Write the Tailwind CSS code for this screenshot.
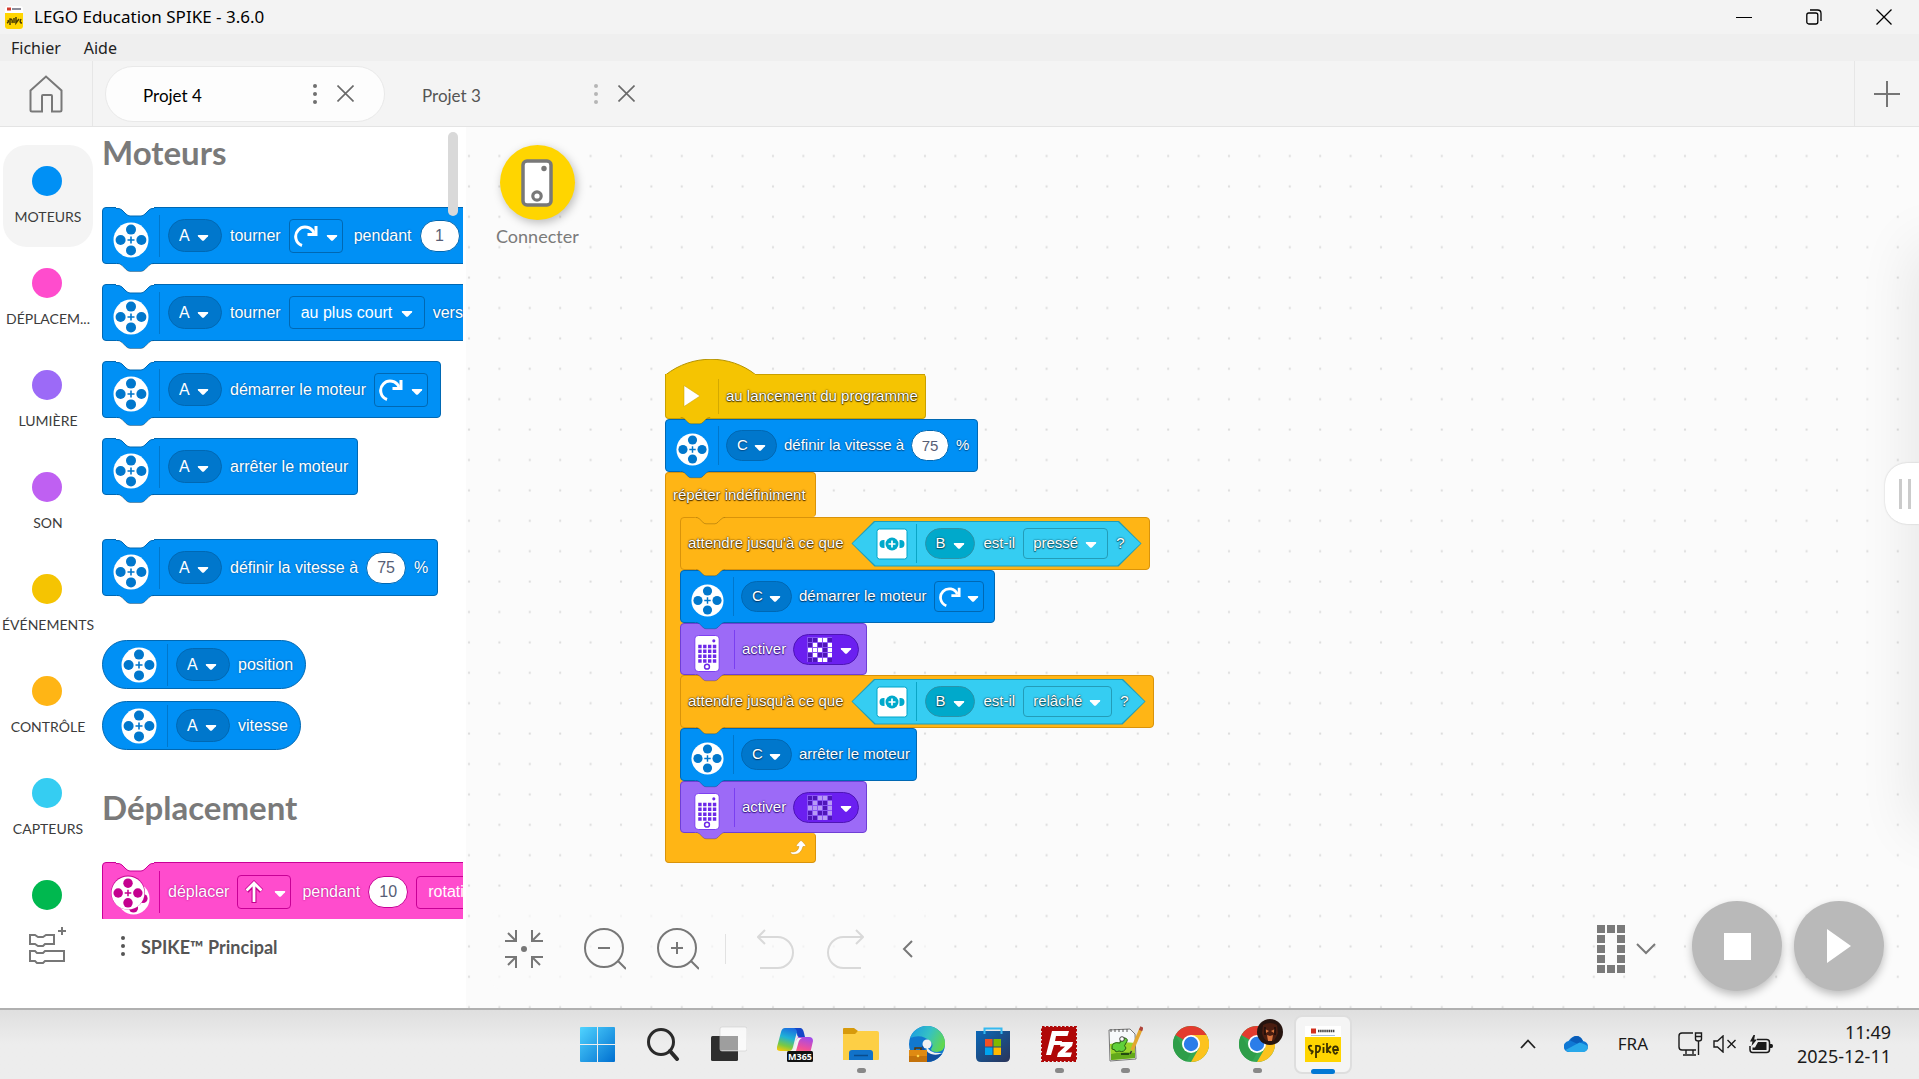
<!DOCTYPE html>
<html lang="fr">
<head>
<meta charset="utf-8">
<title>LEGO Education SPIKE - 3.6.0</title>
<script src="https://cdn.jsdelivr.net/npm/@tailwindcss/browser@4"></script>
</head>
<body class="flex h-screen flex-col overflow-hidden bg-[#f3f3f3] font-['Noto_Sans',sans-serif] text-black">

<!-- Shared icon symbols -->
<svg class="hidden" aria-hidden="true">
  <symbol id="motor" viewBox="0 0 36 36">
    <circle cx="18" cy="18" r="17.5" fill="#fff"/>
    <g fill="currentColor"><circle cx="18" cy="7.6" r="5"/><circle cx="18" cy="28.4" r="5"/><circle cx="7.6" cy="18" r="5"/><circle cx="28.4" cy="18" r="5"/></g>
    <path d="M18 14.5v7M14.5 18h7" stroke="currentColor" stroke-width="1.6"/>
  </symbol>
  <symbol id="caret" viewBox="0 0 12 8"><path d="M1.5 1h9q1.4 0 .5 1.2L7.2 6.2q-1.2 1.2-2.4 0L1 2.200q-.9-1.200.5-1.200z" fill="#fff"/></symbol>
  <symbol id="rotate" viewBox="0 0 24 24"><path d="M8 21.500A9.500 9.500 0 1 1 20 9" fill="none" stroke="#fff" stroke-width="3"/><path d="M13.500 10.500h8.500V2" fill="none" stroke="#fff" stroke-width="3"/></symbol>
  <symbol id="force" viewBox="0 0 32 32">
    <rect x="1" y="1" width="30" height="30" rx="2.500" fill="#fff" stroke="#00a5c9"/>
    <circle cx="16" cy="16" r="6.500" fill="currentColor"/><path d="M16 12.500v7M12.500 16h7" stroke="#fff" stroke-width="1.700"/>
    <path d="M8.500 12v8q-5 .5-5-4t5-4zM23.500 12q5-.5 5 4t-5 4z" fill="currentColor"/>
  </symbol>
  <symbol id="hub" viewBox="0 0 26 38">
    <rect x=".5" y=".5" width="25" height="37" rx="3.500" fill="#fff" stroke="#7b3df0"/>
    <g fill="#6d28e8"><circle cx="20" cy="6" r="1.600"/>
    <path d="M4 10h3.500v3.500H4zM9 10h3.500v3.500H9zM14 10h3.500v3.500H14zM19 10h3.500v3.500H19zM4 15h3.500v3.500H4zM9 15h3.500v3.500H9zM14 15h3.500v3.500H14zM19 15h3.500v3.500H19zM4 20h3.500v3.500H4zM9 20h3.500v3.500H9zM14 20h3.500v3.500H14zM19 20h3.500v3.500H19zM4 25h3.500v3.500H4zM9 25h3.500v3.500H9zM14 25h3.500v3.500H14zM19 25h3.500v3.500H19z"/></g>
    <circle cx="13" cy="32.500" r="2.500" fill="none" stroke="#6d28e8" stroke-width="1.500"/>
  </symbol>
  <symbol id="matrix" viewBox="0 0 25 25">
    <path d="M0 0h25v25H0z" fill="#8a55f4"/>
    <path d="M1 1h4v4H1zM6 1h4v4H6zM21 1h4v4h-4zM1 6h4v4H1zM11 6h4v4h-4zM16 6h4v4h-4zM16 11h4v4h-4zM1 16h4v4H1zM11 16h4v4h-4zM16 16h4v4h-4zM1 21h4v4H1zM6 21h4v4H6zM21 21h4v4h-4z" fill="#4f16b8"/>
    <path d="M11 1h4v4h-4zM16 1h4v4h-4zM6 6h4v4H6zM21 6h4v4h-4zM1 11h4v4H1zM6 11h4v4H6zM11 11h4v4h-4zM21 11h4v4h-4zM6 16h4v4H6zM21 16h4v4h-4zM11 21h4v4h-4zM16 21h4v4h-4z" fill="currentColor"/>
  </symbol>
  <symbol id="notch" viewBox="0 0 38 10"><path d="M0 0h38v1q-3 0-5 2l-4 4q-2 2-4 2H14q-2 0-4-2L6 3Q4 1 0 1z" fill="#fff"/><path d="M0 1.500q4-.5 6 1.500l4 4q2 2 4 2h11q2 0 4-2l4-4q2-2 5-1.500" fill="none" stroke="currentColor"/></symbol>
  <symbol id="tail" viewBox="0 0 38 10"><path d="M0 0h38v.5q-3 0-5 2l-4 4q-2 2-4 2H14q-2 0-4-2L6 2.500Q4 .5 0 .5z" fill="currentColor"/><path d="M1 .5q3 0 5 2l4 4q2 2 4 2h11q2 0 4-2l4-4q2-2 5-2" fill="none" stroke="#000" stroke-opacity=".28"/></symbol>
  <symbol id="chrome" viewBox="0 0 36 36">
    <circle cx="18" cy="18" r="18" fill="#34a853"/>
    <path d="M18 18 2.400 9A18 18 0 0 1 33.600 9z" fill="#e33b2e"/><path d="M18 9h15.600A18 18 0 0 1 18 36l7.800-13.500z" fill="#fcc31e"/>
    <path d="M2.400 9 10.200 22.500 18 27l-4.800 8.400A18 18 0 0 1 2.400 9z" fill="#2e9e49"/>
    <circle cx="18" cy="18" r="9" fill="#fff"/><circle cx="18" cy="18" r="7.200" fill="#2b7de9"/>
  </symbol>
</svg>

<!-- Title bar -->
<header class="flex h-[34px] shrink-0 items-center bg-[#f3f3f3] pl-1">
  <svg class="h-[26px] w-5" viewBox="0 0 20 26"><rect x="1" y="2" width="18" height="23" rx="3" fill="#fff"/><path d="M1 9h18v13q0 3-3 3H4q-3 0-3-3z" fill="#ffd500"/><path d="M3 3.500h4v3H3z" fill="#d33a2c"/><path d="M8 5h9" stroke="#667" stroke-width="1.500"/><path d="M3 19q2-1 1-3M6 21v-6q3 0 2 4M10 14v5M12 13v6l3-4M17 15q-2 4 1 4" stroke="#4a3c00" stroke-width="1.500" fill="none"/></svg>
  <h1 class="ml-[10px] text-[17px]">LEGO Education SPIKE - 3.6.0</h1>
  <div class="ml-auto flex items-center">
    <button class="flex h-[34px] w-[70px] items-center justify-center" aria-label="Réduire"><svg class="size-4" viewBox="0 0 16 16"><path d="M0 8.500h16" stroke="#000"/></svg></button>
    <button class="flex h-[34px] w-[70px] items-center justify-center" aria-label="Restaurer"><svg class="size-4" viewBox="0 0 16 16" fill="none" stroke="#000" stroke-width="1.300"><rect x=".8" y="4" width="11" height="11" rx="2"/><path d="M4 1h7.500q3.500 0 3.500 3.500V12"/></svg></button>
    <button class="flex h-[34px] w-[70px] items-center justify-center" aria-label="Fermer"><svg class="size-4" viewBox="0 0 16 16"><path d="m.5.5 15 15m0-15-15 15" stroke="#000" stroke-width="1.300"/></svg></button>
  </div>
</header>

<nav class="flex h-[27px] shrink-0 items-center gap-[23px] bg-[#efefef] pl-[11px] text-base text-[#222]">
  <a href="#">Fichier</a><a href="#">Aide</a>
</nav>

<!-- Project tabs -->
<div class="flex h-[66px] shrink-0 items-center border-b border-[#e4e4e4] bg-[#f4f4f4] font-['Lato',sans-serif] text-[17px]">
  <button class="flex h-full w-[93px] items-center justify-center border-r border-[#e6e6e6]" aria-label="Accueil">
    <svg class="h-[38px] w-[34px]" viewBox="0 0 34 38" fill="none" stroke="#787878" stroke-width="2"><path d="M1.500 15.500 17 1.500l15.500 14V35q0 1.500-1.500 1.500h-8V21q0-1-1-1h-8q-1 0-1 1v15.500H3q-1.500 0-1.500-1.500z"/></svg>
  </button>
  <div class="ml-3 flex h-14 w-[280px] items-center rounded-[28px] border border-[#e9e9e9] bg-[#fdfdfd] pr-[30px] pl-[37px]">
    <a href="#" class="mt-1 text-black">Projet 4</a>
    <button class="ml-auto" aria-label="Options"><svg class="h-7 w-1" viewBox="0 0 4 28" fill="#707070"><circle cx="2" cy="6" r="2"/><circle cx="2" cy="14" r="2"/><circle cx="2" cy="22" r="2"/></svg></button>
    <button class="ml-5" aria-label="Fermer Projet 4"><svg class="size-[17px]" viewBox="0 0 17 17"><path d="m.5.5 16 16m0-16-16 16" stroke="#6a6a6a" stroke-width="1.600"/></svg></button>
  </div>
  <div class="flex h-14 w-[280px] items-center pr-[30px] pl-[37px]">
    <a href="#" class="mt-1 text-[#555]">Projet 3</a>
    <button class="ml-auto" aria-label="Options"><svg class="h-7 w-1" viewBox="0 0 4 28" fill="#b5b5b5"><circle cx="2" cy="6" r="2"/><circle cx="2" cy="14" r="2"/><circle cx="2" cy="22" r="2"/></svg></button>
    <button class="ml-5" aria-label="Fermer Projet 3"><svg class="size-[17px]" viewBox="0 0 17 17"><path d="m.5.5 16 16m0-16-16 16" stroke="#6a6a6a" stroke-width="1.600"/></svg></button>
  </div>
  <button class="ml-auto flex h-full w-[65px] items-center justify-center border-l border-[#e6e6e6]" aria-label="Nouveau projet"><svg class="size-[26px]" viewBox="0 0 26 26"><path d="M13 0v26M0 13h26" stroke="#757575" stroke-width="2"/></svg></button>
</div>

<main class="flex min-h-0 flex-1 border-b-2 border-[#b0b0b0]">

  <!-- Categories and block palette -->
  <aside class="flex w-[466px] shrink-0 flex-col bg-white">
    <div class="flex min-h-0 flex-1 overflow-hidden">
      <ul class="w-[93px] shrink-0 pt-[18px] pl-[3px] font-['Lato',sans-serif] text-sm text-[#3c3c3c]">
        <li><button class="flex h-[102px] w-[90px] flex-col items-center rounded-3xl bg-[#f4f4f4] pt-[21px] whitespace-nowrap"><span class="mr-[2px] size-[30px] rounded-full bg-[#0090f5]"></span><span class="mt-3 leading-[18px]">MOTEURS</span></button></li>
        <li><button class="flex h-[102px] w-[90px] flex-col items-center pt-[21px] whitespace-nowrap"><span class="mr-[2px] size-[30px] rounded-full bg-[#ff4ccd]"></span><span class="mt-3 leading-[18px]">DÉPLACEM...</span></button></li>
        <li><button class="flex h-[102px] w-[90px] flex-col items-center pt-[21px] whitespace-nowrap"><span class="mr-[2px] size-[30px] rounded-full bg-[#9c6af7]"></span><span class="mt-3 leading-[18px]">LUMIÈRE</span></button></li>
        <li><button class="flex h-[102px] w-[90px] flex-col items-center pt-[21px] whitespace-nowrap"><span class="mr-[2px] size-[30px] rounded-full bg-[#bf60f2]"></span><span class="mt-3 leading-[18px]">SON</span></button></li>
        <li><button class="flex h-[102px] w-[90px] flex-col items-center pt-[21px] whitespace-nowrap"><span class="mr-[2px] size-[30px] rounded-full bg-[#f5c402]"></span><span class="mt-3 leading-[18px]">ÉVÉNEMENTS</span></button></li>
        <li><button class="flex h-[102px] w-[90px] flex-col items-center pt-[21px] whitespace-nowrap"><span class="mr-[2px] size-[30px] rounded-full bg-[#ffb515]"></span><span class="mt-3 leading-[18px]">CONTRÔLE</span></button></li>
        <li><button class="flex h-[102px] w-[90px] flex-col items-center pt-[21px] whitespace-nowrap"><span class="mr-[2px] size-[30px] rounded-full bg-[#35cdf2]"></span><span class="mt-3 leading-[18px]">CAPTEURS</span></button></li>
        <li><button class="flex h-[102px] w-[90px] flex-col items-center pt-[21px] whitespace-nowrap" aria-label="Opérateurs"><span class="mr-[2px] size-[30px] rounded-full bg-[#00b84f]"></span></button></li>
      </ul>

      <div class="relative ml-[9px] w-[361px] overflow-hidden pt-[5px] font-['Liberation_Sans',sans-serif] text-base whitespace-nowrap text-white">
        <h2 class="mb-[35px] font-['Lato',sans-serif] text-[33px] leading-10 font-bold text-[#7a7a7a]">Moteurs</h2>
        <div class="flex flex-col items-start gap-5 [text-shadow:0_0_2px_#004f8f]">

          <div class="relative flex h-[57px] items-center gap-2 rounded-[4px] border border-[#0068b3] bg-[#0090f5] pr-[11px] pl-[10px]">
            <svg class="absolute -top-px left-[13px] h-[10px] w-[38px] text-[#0068b3]"><use href="#notch"/></svg>
            <svg class="absolute top-[55px] left-[13px] h-[10px] w-[38px] text-[#0090f5]"><use href="#tail"/></svg>
            <svg class="mt-2 mr-[2px] size-9 text-[#0077cc]"><use href="#motor"/></svg>
            <i class="h-[42px] w-px bg-[#0077cc]"></i>
            <label class="relative"><select aria-label="Port" class="block h-[33px] w-[54px] appearance-none rounded-full border border-[#0068b3] bg-[#0077cc] pl-[10px]"><option>A</option></select><svg class="pointer-events-none absolute top-[15px] left-[29px] h-2 w-3"><use href="#caret"/></svg></label>
            <span>tourner</span>
            <button aria-label="Sens horaire" class="mr-[3px] flex h-[34px] w-[54px] items-center gap-2 rounded-[4px] border border-[#0068b3] pl-1"><svg class="size-6"><use href="#rotate"/></svg><svg class="mt-1 h-2 w-3"><use href="#caret"/></svg></button>
            <span>pendant</span>
            <input aria-label="Valeur" value="1" class="h-8 w-10 rounded-full border border-[#0068b3] bg-white text-center text-[#575e75]">
          </div>

          <div class="relative flex h-[57px] items-center gap-2 rounded-[4px] border border-[#0068b3] bg-[#0090f5] pr-[11px] pl-[10px]">
            <svg class="absolute -top-px left-[13px] h-[10px] w-[38px] text-[#0068b3]"><use href="#notch"/></svg>
            <svg class="absolute top-[55px] left-[13px] h-[10px] w-[38px] text-[#0090f5]"><use href="#tail"/></svg>
            <svg class="mt-2 mr-[2px] size-9 text-[#0077cc]"><use href="#motor"/></svg>
            <i class="h-[42px] w-px bg-[#0077cc]"></i>
            <label class="relative"><select aria-label="Port" class="block h-[33px] w-[54px] appearance-none rounded-full border border-[#0068b3] bg-[#0077cc] pl-[10px]"><option>A</option></select><svg class="pointer-events-none absolute top-[15px] left-[29px] h-2 w-3"><use href="#caret"/></svg></label>
            <span>tourner</span>
            <label class="relative"><select aria-label="Trajet" class="block h-[33px] w-[136px] appearance-none rounded-[4px] border border-[#0068b3] pl-[11px]"><option>au plus court</option></select><svg class="pointer-events-none absolute top-[14px] right-3 h-2 w-3"><use href="#caret"/></svg></label>
            <span>vers</span>
          </div>

          <div class="relative flex h-[57px] items-center gap-2 rounded-[4px] border border-[#0068b3] bg-[#0090f5] pr-3 pl-[10px]">
            <svg class="absolute -top-px left-[13px] h-[10px] w-[38px] text-[#0068b3]"><use href="#notch"/></svg>
            <svg class="absolute top-[55px] left-[13px] h-[10px] w-[38px] text-[#0090f5]"><use href="#tail"/></svg>
            <svg class="mt-2 mr-[2px] size-9 text-[#0077cc]"><use href="#motor"/></svg>
            <i class="h-[42px] w-px bg-[#0077cc]"></i>
            <label class="relative"><select aria-label="Port" class="block h-[33px] w-[54px] appearance-none rounded-full border border-[#0068b3] bg-[#0077cc] pl-[10px]"><option>A</option></select><svg class="pointer-events-none absolute top-[15px] left-[29px] h-2 w-3"><use href="#caret"/></svg></label>
            <span>démarrer le moteur</span>
            <button aria-label="Sens horaire" class="flex h-[34px] w-[54px] items-center gap-2 rounded-[4px] border border-[#0068b3] pl-1"><svg class="size-6"><use href="#rotate"/></svg><svg class="mt-1 h-2 w-3"><use href="#caret"/></svg></button>
          </div>

          <div class="relative flex h-[57px] items-center gap-2 rounded-[4px] border border-[#0068b3] bg-[#0090f5] pr-[9px] pl-[10px]">
            <svg class="absolute -top-px left-[13px] h-[10px] w-[38px] text-[#0068b3]"><use href="#notch"/></svg>
            <svg class="absolute top-[55px] left-[13px] h-[10px] w-[38px] text-[#0090f5]"><use href="#tail"/></svg>
            <svg class="mt-2 mr-[2px] size-9 text-[#0077cc]"><use href="#motor"/></svg>
            <i class="h-[42px] w-px bg-[#0077cc]"></i>
            <label class="relative"><select aria-label="Port" class="block h-[33px] w-[54px] appearance-none rounded-full border border-[#0068b3] bg-[#0077cc] pl-[10px]"><option>A</option></select><svg class="pointer-events-none absolute top-[15px] left-[29px] h-2 w-3"><use href="#caret"/></svg></label>
            <span>arrêter le moteur</span>
          </div>

          <div class="relative mt-6 flex h-[57px] items-center gap-2 rounded-[4px] border border-[#0068b3] bg-[#0090f5] pr-[9px] pl-[10px]">
            <svg class="absolute -top-px left-[13px] h-[10px] w-[38px] text-[#0068b3]"><use href="#notch"/></svg>
            <svg class="absolute top-[55px] left-[13px] h-[10px] w-[38px] text-[#0090f5]"><use href="#tail"/></svg>
            <svg class="mt-2 mr-[2px] size-9 text-[#0077cc]"><use href="#motor"/></svg>
            <i class="h-[42px] w-px bg-[#0077cc]"></i>
            <label class="relative"><select aria-label="Port" class="block h-[33px] w-[54px] appearance-none rounded-full border border-[#0068b3] bg-[#0077cc] pl-[10px]"><option>A</option></select><svg class="pointer-events-none absolute top-[15px] left-[29px] h-2 w-3"><use href="#caret"/></svg></label>
            <span>définir la vitesse à</span>
            <input aria-label="Vitesse" value="75" class="h-8 w-10 rounded-full border border-[#0068b3] bg-white text-center text-[#575e75]">
            <span>%</span>
          </div>
        </div>

        <div class="mt-11 flex flex-col items-start gap-3 [text-shadow:0_0_2px_#004f8f]">
          <div class="flex h-[49px] items-center gap-2 rounded-full border border-[#0068b3] bg-[#0090f5] pr-3 pl-[18px]">
            <svg class="mr-[2px] size-9 text-[#0077cc]"><use href="#motor"/></svg>
            <i class="h-[42px] w-px bg-[#0077cc]"></i>
            <label class="relative"><select aria-label="Port" class="block h-[33px] w-[54px] appearance-none rounded-full border border-[#0068b3] bg-[#0077cc] pl-[10px]"><option>A</option></select><svg class="pointer-events-none absolute top-[15px] left-[29px] h-2 w-3"><use href="#caret"/></svg></label>
            <span>position</span>
          </div>
          <div class="flex h-[49px] items-center gap-2 rounded-full border border-[#0068b3] bg-[#0090f5] pr-3 pl-[18px]">
            <svg class="mr-[2px] size-9 text-[#0077cc]"><use href="#motor"/></svg>
            <i class="h-[42px] w-px bg-[#0077cc]"></i>
            <label class="relative"><select aria-label="Port" class="block h-[33px] w-[54px] appearance-none rounded-full border border-[#0068b3] bg-[#0077cc] pl-[10px]"><option>A</option></select><svg class="pointer-events-none absolute top-[15px] left-[29px] h-2 w-3"><use href="#caret"/></svg></label>
            <span>vitesse</span>
          </div>
        </div>

        <h2 class="mt-[37px] mb-[35px] font-['Lato',sans-serif] text-[33px] leading-10 font-bold text-[#7a7a7a]">Déplacement</h2>
        <div class="flex items-start [text-shadow:0_0_2px_#a0007c]">
          <div class="relative flex h-[60px] shrink-0 items-center gap-2 rounded-[4px] border border-[#c80096] bg-[#ff4ccd] pl-2">
            <svg class="absolute -top-px left-[13px] h-[10px] w-[38px] text-[#c80096]"><use href="#notch"/></svg>
            <svg class="mt-2 mr-[2px] h-10 w-[38px] overflow-visible text-[#c4008f]" viewBox="0 0 38 40"><use href="#motor" x="6" y="6" width="33" height="33"/><circle cx="17" cy="16.500" r="17" fill="#c4008f"/><use href="#motor" x="0" y="0" width="34" height="34"/></svg>
            <i class="h-[42px] w-px bg-[#d6009f]"></i>
            <span>déplacer</span>
            <button aria-label="Avant" class="mr-[3px] flex h-[34px] w-[54px] items-center gap-2 rounded-[4px] border border-[#c80096] pl-1"><svg class="size-6" viewBox="0 0 24 24" fill="none"><path d="M12 23V4M4.500 11 12 3.500l7.500 7.500" stroke="#c4008f" stroke-width="5"/><path d="M12 22V4M4.500 10.500 12 3l7.500 7.500" stroke="#fff" stroke-width="2.800"/></svg><svg class="mt-1 h-2 w-3"><use href="#caret"/></svg></button>
            <span>pendant</span>
            <input aria-label="Distance" value="10" class="h-8 w-10 rounded-full border border-[#c80096] bg-white text-center text-[#575e75]">
            <label><select aria-label="Unité" class="block h-[33px] w-[110px] appearance-none rounded-[4px] border border-[#c80096] pl-[11px]"><option>rotations</option></select></label>
          </div>
        </div>
        <div class="absolute top-[5px] right-[5px] h-[84px] w-[10px] rounded-full bg-[#d9d9d9]"></div>
      </div>
    </div>

    <footer class="flex h-[89px] shrink-0 items-start pt-2 pl-[29px] font-['Lato',sans-serif]">
      <button aria-label="Extensions"><svg class="h-[38px] w-[38px]" viewBox="0 0 38 38" fill="none" stroke="#777" stroke-width="2"><path d="M1 8h5l3 2h5l3-2h8v9H16l-2 2H9l-3-2H1zM1 24h5l2 2h6l2-2h19v10H16l-2 2H8l-2-2H1zM33 0v8M29 4h8"/></svg></button>
      <button class="mt-[5px] ml-[54px]" aria-label="Menu"><svg class="h-7 w-1" viewBox="0 0 4 28" fill="#555"><circle cx="2" cy="6" r="2"/><circle cx="2" cy="14" r="2"/><circle cx="2" cy="22" r="2"/></svg></button>
      <span class="mt-2 ml-4 text-lg leading-6 font-bold text-[#555]">SPIKE™ Principal</span>
    </footer>
  </aside>

  <!-- Programming canvas -->
  <section class="relative min-w-0 flex-1 overflow-hidden bg-[#fbfbfb]">
    <svg class="absolute inset-0 h-full w-full" aria-hidden="true"><defs><pattern id="dots" width="30.4" height="30.4" patternUnits="userSpaceOnUse"><rect x="2" y="28" width="2" height="2" fill="#dcdcdc"/></pattern></defs><rect width="100%" height="100%" fill="url(#dots)"/></svg>

    <button class="absolute top-[18px] left-[30px] flex flex-col items-center font-['Lato',sans-serif] text-lg leading-6 text-[#7a7a7a]">
      <span class="flex size-[75px] items-center justify-center rounded-full bg-[#ffd500] shadow-[2px_3px_10px_rgba(0,0,0,0.25)]"><svg class="h-12 w-8" viewBox="0 0 32 48"><rect x="2" y="2" width="28" height="44" rx="4" fill="#fff" stroke="#787878" stroke-width="3.500"/><circle cx="23" cy="9.500" r="2.700" fill="#787878"/><circle cx="16" cy="37" r="4.200" fill="none" stroke="#787878" stroke-width="3.200"/></svg></span>
      <span class="mt-1">Connecter</span>
    </button>

    <!-- Program stack -->
    <div class="absolute top-[231px] left-[199px] flex flex-col items-start font-['Liberation_Sans',sans-serif] text-[15px] whitespace-nowrap text-white">
      <svg class="relative top-px h-4 w-[92px]" viewBox="0 0 92 16"><path d="M.5 16C27-5 65-5 91 16" fill="#f5c402" stroke="#b59300"/></svg>
      <div class="relative z-30 flex h-[45px] items-center gap-[7px] rounded-[4px] rounded-tl-none border border-t-0 border-[#c9a000] bg-[#f5c402] pr-[7px] [text-shadow:0_0_1px_#4a3800,0_0_2px_#4a3800,0_1px_1px_#4a3800]">
        <i class="absolute top-0 right-0 h-px w-[170px] bg-[#c9a000]"></i>
        <svg class="absolute top-[43px] left-[13px] h-2 w-[32px] text-[#f5c402]"><use href="#tail"/></svg>
        <svg class="ml-[17px] h-6 w-[18px]" viewBox="0 0 18 24"><path d="M1 1.500v21L17 12z" fill="#fff" stroke="#c9a000" stroke-opacity=".5"/></svg>
        <i class="ml-[10px] h-[35px] w-px bg-[#d4a900]"></i>
        <span>au lancement du programme</span>
      </div>
      <div class="relative z-20 flex h-[53px] items-center gap-[7px] rounded-[4px] border border-[#0068b3] bg-[#0090f5] pr-2 pl-[10px] [text-shadow:0_0_2px_#004f8f,0_1px_1px_#004f8f]">
        <svg class="absolute top-[51px] left-[13px] h-2 w-[32px] text-[#0090f5]"><use href="#tail"/></svg>
        <svg class="mt-2 mr-[2px] size-[33px] text-[#0077cc]"><use href="#motor"/></svg>
        <i class="h-[39px] w-px bg-[#0077cc]"></i>
        <label class="relative"><select aria-label="Port" class="block h-[31px] w-[51px] appearance-none rounded-full border border-[#0068b3] bg-[#0077cc] pl-[10px] [text-shadow:inherit]"><option>C</option></select><svg class="pointer-events-none absolute top-[14px] left-7 h-2 w-3"><use href="#caret"/></svg></label>
        <span>définir la vitesse à</span>
        <input aria-label="Vitesse" value="75" class="h-[31px] w-[38px] rounded-full border border-[#0068b3] bg-white text-center text-[#575e75]">
        <span>%</span>
      </div>

      <!-- Loop -->
      <div class="relative z-10 flex h-[45px] w-[151px] items-center rounded-[4px] rounded-bl-none border border-b-0 border-[#d9930a] bg-[#ffb515] pl-[7px] [text-shadow:0_0_1px_#4d3000,0_0_2px_#4d3000,0_1px_1px_#4d3000]">répéter indéfiniment</div>
      <div class="flex flex-col items-start border-l border-[#d9930a] bg-[linear-gradient(#ffb515,#ffb515)] bg-size-[20px_100%] bg-no-repeat pl-[14px]">
        <div class="relative z-[9] flex h-[53px] items-center gap-2 rounded-[4px] border border-[#d9930a] bg-[#ffb515] pr-[7px] pl-[7px] [text-shadow:0_0_1px_#4d3000,0_0_2px_#4d3000,0_1px_1px_#4d3000]">
          <svg class="absolute -top-px left-[13px] h-2 w-[32px] text-[#ffb515]"><use href="#tail"/></svg>
          <svg class="absolute top-[51px] left-[13px] h-2 w-[32px] text-[#ffb515]"><use href="#tail"/></svg>
          <span>attendre jusqu'à ce que</span>
          <div class="relative flex h-[46px] items-center gap-2 pr-[17px] pl-[25px] [text-shadow:0_0_1px_#0a5566,0_0_2px_#0a5566,0_1px_1px_#0a5566]">
            <div class="absolute inset-0 bg-[#1f9db8] [clip-path:polygon(23px_0,calc(100%-23px)_0,100%_50%,calc(100%-23px)_100%,23px_100%,0_50%)]"></div>
            <div class="absolute inset-px bg-[#35cdf2] [clip-path:polygon(23px_0,calc(100%-23px)_0,100%_50%,calc(100%-23px)_100%,23px_100%,0_50%)]"></div>
            <svg class="relative size-8 text-[#00a9cb]"><use href="#force"/></svg>
            <i class="relative h-[39px] w-px bg-[#0ba5c6]"></i>
            <label class="relative"><select aria-label="Port" class="block h-[31px] w-[50px] appearance-none rounded-full border border-[#2a93aa] bg-[#00a9cb] pl-[9px] [text-shadow:inherit]"><option>B</option></select><svg class="pointer-events-none absolute top-[14px] left-7 h-2 w-3"><use href="#caret"/></svg></label>
            <span class="relative">est-il</span>
            <label class="relative"><select aria-label="État" class="block h-[31px] w-[85px] appearance-none rounded-[4px] border border-[#239cb8] pl-[9px] [text-shadow:inherit]"><option>pressé</option></select><svg class="pointer-events-none absolute top-[13px] right-[11px] h-2 w-3"><use href="#caret"/></svg></label>
            <span class="relative">?</span>
          </div>
        </div>
        <div class="relative z-[8] flex h-[53px] items-center gap-[7px] rounded-[4px] border border-[#0068b3] bg-[#0090f5] pr-[10px] pl-[10px] [text-shadow:0_0_2px_#003a6b,0_1px_1px_#003a6b]">
          <svg class="absolute top-[51px] left-[13px] h-2 w-[32px] text-[#0090f5]"><use href="#tail"/></svg>
          <svg class="mt-2 mr-[2px] size-[33px] text-[#0077cc]"><use href="#motor"/></svg>
          <i class="h-[39px] w-px bg-[#0077cc]"></i>
          <label class="relative"><select aria-label="Port" class="block h-[31px] w-[51px] appearance-none rounded-full border border-[#0068b3] bg-[#0077cc] pl-[10px] [text-shadow:inherit]"><option>C</option></select><svg class="pointer-events-none absolute top-[14px] left-7 h-2 w-3"><use href="#caret"/></svg></label>
          <span>démarrer le moteur</span>
          <button aria-label="Sens horaire" class="flex h-[31px] w-[50px] items-center gap-[6px] rounded-[4px] border border-[#0068b3] pl-1"><svg class="size-[22px]"><use href="#rotate"/></svg><svg class="mt-1 h-2 w-3"><use href="#caret"/></svg></button>
        </div>
        <div class="relative z-[7] flex h-[52px] items-center gap-[7px] rounded-[4px] border border-[#6f3fd6] bg-[#9c6af7] pr-[7px] pl-[13px] [text-shadow:0_0_1px_#3b1689,0_0_2px_#3b1689,0_1px_1px_#3b1689]">
          <svg class="absolute top-[50px] left-[13px] h-2 w-[32px] text-[#9c6af7]"><use href="#tail"/></svg>
          <svg class="mt-2 mr-[7px] h-[37px] w-[26px]"><use href="#hub"/></svg>
          <i class="h-[39px] w-px bg-[#7a3ff0]"></i>
          <span>activer</span>
          <button aria-label="Image lumineuse" class="flex h-[31px] w-[66px] items-center gap-2 rounded-full border border-[#4e15b5] bg-[#6b1ff0] pl-[13px] text-white"><svg class="size-[25px]"><use href="#matrix"/></svg><svg class="mt-1 h-2 w-3"><use href="#caret"/></svg></button>
        </div>
        <div class="relative z-[6] flex h-[53px] items-center gap-2 rounded-[4px] border border-[#d9930a] bg-[#ffb515] pr-[7px] pl-[7px] [text-shadow:0_0_1px_#4d3000,0_0_2px_#4d3000,0_1px_1px_#4d3000]">
          <svg class="absolute top-[51px] left-[13px] h-2 w-[32px] text-[#ffb515]"><use href="#tail"/></svg>
          <span>attendre jusqu'à ce que</span>
          <div class="relative flex h-[46px] items-center gap-2 pr-[17px] pl-[25px] [text-shadow:0_0_1px_#0a5566,0_0_2px_#0a5566,0_1px_1px_#0a5566]">
            <div class="absolute inset-0 bg-[#1f9db8] [clip-path:polygon(23px_0,calc(100%-23px)_0,100%_50%,calc(100%-23px)_100%,23px_100%,0_50%)]"></div>
            <div class="absolute inset-px bg-[#35cdf2] [clip-path:polygon(23px_0,calc(100%-23px)_0,100%_50%,calc(100%-23px)_100%,23px_100%,0_50%)]"></div>
            <svg class="relative size-8 text-[#00a9cb]"><use href="#force"/></svg>
            <i class="relative h-[39px] w-px bg-[#0ba5c6]"></i>
            <label class="relative"><select aria-label="Port" class="block h-[31px] w-[50px] appearance-none rounded-full border border-[#2a93aa] bg-[#00a9cb] pl-[9px] [text-shadow:inherit]"><option>B</option></select><svg class="pointer-events-none absolute top-[14px] left-7 h-2 w-3"><use href="#caret"/></svg></label>
            <span class="relative">est-il</span>
            <label class="relative"><select aria-label="État" class="block h-[31px] w-[89px] appearance-none rounded-[4px] border border-[#239cb8] pl-[9px] [text-shadow:inherit]"><option>relâché</option></select><svg class="pointer-events-none absolute top-[13px] right-[11px] h-2 w-3"><use href="#caret"/></svg></label>
            <span class="relative">?</span>
          </div>
        </div>
        <div class="relative z-[5] flex h-[53px] items-center gap-[7px] rounded-[4px] border border-[#0068b3] bg-[#0090f5] pr-[6px] pl-[10px] [text-shadow:0_0_2px_#003a6b,0_1px_1px_#003a6b]">
          <svg class="absolute top-[51px] left-[13px] h-2 w-[32px] text-[#0090f5]"><use href="#tail"/></svg>
          <svg class="mt-2 mr-[2px] size-[33px] text-[#0077cc]"><use href="#motor"/></svg>
          <i class="h-[39px] w-px bg-[#0077cc]"></i>
          <label class="relative"><select aria-label="Port" class="block h-[31px] w-[51px] appearance-none rounded-full border border-[#0068b3] bg-[#0077cc] pl-[10px] [text-shadow:inherit]"><option>C</option></select><svg class="pointer-events-none absolute top-[14px] left-7 h-2 w-3"><use href="#caret"/></svg></label>
          <span>arrêter le moteur</span>
        </div>
        <div class="relative z-[4] flex h-[52px] items-center gap-[7px] rounded-[4px] border border-[#6f3fd6] bg-[#9c6af7] pr-[7px] pl-[13px] [text-shadow:0_0_1px_#3b1689,0_0_2px_#3b1689,0_1px_1px_#3b1689]">
          <svg class="absolute top-[50px] left-[13px] h-2 w-[32px] text-[#9c6af7]"><use href="#tail"/></svg>
          <svg class="mt-2 mr-[7px] h-[37px] w-[26px]"><use href="#hub"/></svg>
          <i class="h-[39px] w-px bg-[#7a3ff0]"></i>
          <span>activer</span>
          <button aria-label="Image lumineuse" class="flex h-[31px] w-[66px] items-center gap-2 rounded-full border border-[#4e15b5] bg-[#6b1ff0] pl-[13px] text-[#b79af5]"><svg class="size-[25px]"><use href="#matrix"/></svg><svg class="mt-1 h-2 w-3"><use href="#caret"/></svg></button>
        </div>
      </div>
      <div class="flex h-[30px] w-[151px] items-center justify-end rounded-[4px] rounded-tl-none border border-t-0 border-[#d9930a] bg-[#ffb515] pr-2">
        <svg class="h-4 w-[18px]" viewBox="0 0 18 16"><path d="M1.500 11.500q-.5 3 3.500 3 7 0 9-8h2q1.500 0 .5-1.500l-3.500-4q-1-1-2 0l-3.500 4q-1 1.500.5 1.500h2q-1 5-5.500 5.500-2 .2-3-.5z" fill="#fff" stroke="#cf8b00" stroke-width=".5"/></svg>
      </div>
    </div>

    <!-- Zoom and history tools -->
    <div class="absolute bottom-[19px] left-6 flex h-20 items-center rounded-xl bg-[#fbfbfb]/70 pl-[15px] text-[#777]">
      <button aria-label="Centrer"><svg class="size-[38px]" viewBox="0 0 38 38" fill="none" stroke="currentColor" stroke-width="2"><path d="M0 11h11V0M3 3l8 8M27 0v11h11M35 3l-8 8M0 27h11v11M3 35l8-8M27 38V27h11M35 35l-8-8"/><circle cx="19" cy="19" r="3" fill="currentColor" stroke="none"/></svg></button>
      <button class="ml-[41px]" aria-label="Zoom arrière"><svg class="size-[42px]" viewBox="0 0 42 42" fill="none" stroke="currentColor" stroke-width="2"><circle cx="20" cy="20" r="19"/><path d="M14 20h12M34 33l8 8"/></svg></button>
      <button class="ml-[31px]" aria-label="Zoom avant"><svg class="size-[42px]" viewBox="0 0 42 42" fill="none" stroke="currentColor" stroke-width="2"><circle cx="20" cy="20" r="19"/><path d="M14 20h12M20 14v12M34 33l8 8"/></svg></button>
      <i class="ml-[26px] h-[30px] w-px bg-[#e2e2e2]"></i>
      <button class="ml-[31px] text-[#d9d9d9]" aria-label="Annuler"><svg class="h-[40px] w-[37px]" viewBox="0 0 37 40" fill="none" stroke="currentColor" stroke-width="2"><path d="M8 1 1 8l7 7M1 8h19.500a15.500 15.500 0 0 1 0 31H3"/></svg></button>
      <button class="ml-[33px] text-[#d9d9d9]" aria-label="Rétablir"><svg class="h-[40px] w-[37px]" viewBox="0 0 37 40" fill="none" stroke="currentColor" stroke-width="2"><path d="m29 1 7 7-7 7M36 8H16.500a15.500 15.500 0 0 0 0 31H34"/></svg></button>
      <button class="ml-[38px] pr-4" aria-label="Réduire la barre"><svg class="h-[18px] w-[11px]" viewBox="0 0 11 18" fill="none" stroke="currentColor" stroke-width="2"><path d="M10 1 2 9l8 8"/></svg></button>
    </div>

    <!-- Run controls -->
    <div class="absolute right-[35px] bottom-[17px] flex items-center">
      <button class="mt-[6px] flex items-center gap-[11px]" aria-label="Emplacement du programme">
        <svg class="h-12 w-7" viewBox="0 0 28 48" fill="#7a7a7a"><path d="M0 0h8v8H0zM10 0h8v8h-8zM20 0h8v8h-8zM0 10h8v8H0zM20 10h8v8h-8zM0 20h8v8H0zM20 20h8v8h-8zM0 30h8v8H0zM20 30h8v8h-8zM0 40h8v8H0zM10 40h8v8h-8zM20 40h8v8h-8z"/></svg>
        <svg class="h-3 w-5" viewBox="0 0 20 12" fill="none" stroke="#7a7a7a" stroke-width="2"><path d="m1 1 9 9 9-9"/></svg>
      </button>
      <button class="ml-9 flex size-[90px] items-center justify-center rounded-full bg-[#b9b9b9] shadow-[0_4px_9px_rgba(0,0,0,0.25)]" aria-label="Arrêter"><span class="size-[27px] bg-white"></span></button>
      <button class="ml-3 flex size-[90px] items-center justify-center rounded-full bg-[#b9b9b9] shadow-[0_4px_9px_rgba(0,0,0,0.25)]" aria-label="Lancer"><svg class="h-[34px] w-6" viewBox="0 0 24 34"><path d="M0 0v34l24-17z" fill="#fff"/></svg></button>
    </div>

    <!-- Side panel handle -->
    <div class="absolute top-[120px] -right-10 h-[580px] w-10 shadow-[0_0_60px_rgba(0,0,0,0.12)]"></div>
    <button class="absolute top-[336px] right-0 flex h-[61px] w-[34px] items-center gap-[6px] rounded-l-[22px] bg-white pl-[14px] shadow-[0_0_2px_rgba(0,0,0,0.2)]" aria-label="Ouvrir le panneau"><i class="h-[30px] w-[3px] bg-[#cbcbcb]"></i><i class="h-[30px] w-[3px] bg-[#cbcbcb]"></i></button>
  </section>
</main>

<!-- Taskbar -->
<footer class="grid h-[69px] shrink-0 grid-cols-[1fr_auto_1fr] items-center bg-linear-to-b from-[#dfdfdf] to-[#ededed] to-50%">
  <div></div>
  <div class="flex h-full items-center pb-px pl-px">
    <button class="flex w-[66px] justify-center" aria-label="Démarrer"><svg class="size-[35px]" viewBox="0 0 35 35"><defs><linearGradient id="win" x1="0" y1="0" x2="1" y2="1"><stop stop-color="#50d4ff"/><stop offset="1" stop-color="#006fd0"/></linearGradient></defs><path d="M1 0h16v17H0V1q0-1 1-1zM18 0h16q1 0 1 1v16H18zM0 18h17v17H1q-1 0-1-1zM18 18h17v16q0 1-1 1H18z" fill="url(#win)"/></svg></button>
    <button class="flex w-[66px] justify-center" aria-label="Rechercher"><svg class="size-[34px]" viewBox="0 0 34 34" fill="none" stroke="#2a2a2a"><circle cx="15" cy="15" r="12.500" stroke-width="3"/><path d="m24 24 7 8" stroke-width="4" stroke-linecap="round"/></svg></button>
    <button class="flex w-[66px] justify-center" aria-label="Vue des tâches"><svg class="size-9" viewBox="0 0 36 36"><rect y="10" width="27" height="25" rx="1.500" fill="#2e2e2e"/><rect x="9" y="1" width="27" height="24" rx="2" fill="#fff" fill-opacity=".72" stroke="#ccc" stroke-width=".6"/><path d="M9 10h18v14H9z" fill="#9e9e9e"/></svg></button>
    <button class="flex w-[66px] justify-center" aria-label="Microsoft 365 Copilot"><svg class="h-[35px] w-9" viewBox="0 0 36 35"><defs><linearGradient id="cpa" x1=".5" y1="0" x2=".2" y2="1"><stop stop-color="#1b6fe0"/><stop offset=".4" stop-color="#1fb2d6"/><stop offset=".75" stop-color="#7ac943"/><stop offset="1" stop-color="#f5c80b"/></linearGradient><linearGradient id="cpb" x1=".7" y1="0" x2=".4" y2="1"><stop stop-color="#a24bea"/><stop offset=".5" stop-color="#f0509a"/><stop offset="1" stop-color="#ff8b4d"/></linearGradient></defs><path d="M8 1h16q-4 2-6 11l-2 8q-1 4-4 4H3q-4 0-3-4L4 5q1-4 4-4z" fill="url(#cpa)"/><path d="M17 1h6q3 0 4 5l1 4h-6q-2 0-2-4t-3-5z" fill="#1446c8"/><path d="M22 10h10q4 0 4 4l-3 13q-1 5-5 5H12q4 0 5-5l2-12q1-5 3-5z" fill="url(#cpb)"/><path d="M21 11h4q-3 1-4 6l-2 7h-4q2-1 3-6 1-6 3-7z" fill="#f4f4f4"/><rect x="10" y="24" width="26" height="11" rx="1.500" fill="#111"/><text x="23" y="32.500" text-anchor="middle" font-family="Open Sans" font-weight="700" font-size="9" fill="#fff">M365</text></svg></button>
    <button class="relative flex w-[66px] justify-center" aria-label="Explorateur de fichiers"><svg class="h-8 w-9" viewBox="0 0 36 32"><path d="M0 1q0-1 1-1h10l4 3-1 4H0z" fill="#d79a0b"/><path d="M0 6h12l3-3h19q2 0 2 2v26q0 1-1 1H0z" fill="#fdcf45"/><path d="M6 32v-7q0-3 3-3h18q3 0 3 3v7z" fill="#1172c9"/><path d="M11 27.500h14" stroke="#0a4c8c" stroke-width="1.500"/></svg><i class="absolute -bottom-[13px] h-[5px] w-[9px] rounded-full bg-[#888]"></i></button>
    <button class="flex w-[66px] justify-center" aria-label="Microsoft Edge"><svg class="size-9" viewBox="0 0 36 36"><defs><linearGradient id="edg" x1="0" y1=".2" x2="1" y2=".6"><stop stop-color="#1b9de2"/><stop offset=".5" stop-color="#35c1c4"/><stop offset="1" stop-color="#62d84e"/></linearGradient></defs><circle cx="18" cy="18" r="18" fill="#1178cf"/><path d="M1 12A18 18 0 0 1 36 18q0 7-8 8-6 0-6-3 3-4 0-7Q13 7 1 12z" fill="url(#edg)"/><path d="M16 17q-5 12 17 11Q25 38 14 35.500q-9-8 2-18.500z" fill="#104f9e"/><circle cx="18" cy="18" r="4.500" fill="#f1f1f1"/><path d="M18 20q2 8 15 7-5 3-11 1t-4-8z" fill="#f1f1f1"/><path d="M0 24h18v12H0z" fill="#c4720b"/><path d="M0 24h18v6H0z" fill="#df8a12"/><path d="M6 24v-2h6v2" fill="none" stroke="#5a3606" stroke-width="1.500"/><circle cx="9" cy="30" r="1.300" fill="#ffd54a"/></svg></button>
    <button class="flex w-[66px] justify-center" aria-label="Microsoft Store"><svg class="size-9" viewBox="0 0 36 36"><defs><linearGradient id="sto" x1="0" y1="0" x2="1" y2="1"><stop stop-color="#0a68b8"/><stop offset="1" stop-color="#2b3458"/></linearGradient></defs><path d="M9.500 8V2.500h17V8" fill="none" stroke="#35b9f0" stroke-width="2"/><path d="M1 5h34v26q0 5-5 5H6q-5 0-5-5z" fill="url(#sto)"/><path d="M9.500 5v3M26.500 5v3" stroke="#35b9f0" stroke-width="2"/><path d="M10 13h7.500v7.500H10z" fill="#f25022"/><path d="M18.500 13H26v7.500h-7.500z" fill="#7fba00"/><path d="M10 21.500h7.500V29H10z" fill="#00a4ef"/><path d="M18.500 21.500H26V29h-7.500z" fill="#ffb900"/></svg></button>
    <button class="relative flex w-[66px] justify-center" aria-label="FileZilla"><svg class="size-9" viewBox="0 0 36 36"><rect x="1" y="1" width="34" height="34" fill="#b00808" stroke="#b00808" stroke-width="2" stroke-dasharray="2.500 1.500"/><path d="M11 5h17l-1.500 5H15l-1 5h7l-1 4h-7l-3 10H5z" fill="#fff"/><path d="M20 16h12l-1 4-7 6.500h7L29.500 31H16l1-4 7-6.500h-5z" fill="#fff"/></svg><i class="absolute -bottom-[11px] h-[5px] w-[9px] rounded-full bg-[#888]"></i></button>
    <button class="relative flex w-[66px] justify-center" aria-label="Notepad++"><svg class="size-9" viewBox="0 0 36 36"><path d="m2 4 21-1 5 5 1 25-26 2z" fill="#f6f9fb" stroke="#777"/><path d="M3 18q12-3 25-1v15L4 34z" fill="#9bd52c"/><path d="M4 28q12-3 24-1v5L4 34z" fill="#63a91a"/><path d="M5 23q-1-8 8-6 0-6 5-5 4 1 1 5-3 3 0 5-2 5-7 3-4 2-4-1z" fill="#5fd03a" stroke="#275e12"/><circle cx="15" cy="13" r="2.300" fill="#fff" stroke="#222" stroke-width=".8"/><path d="M4 3v3M8 3v3M12 3v3M16 3v3M20 3v3" stroke="#555"/><path d="M14 28h8" stroke="#234b10" stroke-width="2"/><path d="m34 3-9 21" stroke="#e3a72f" stroke-width="3.500"/><path d="m35 1-1.500 3.500" stroke="#b0463c" stroke-width="3.500"/><path d="m24.500 25-1.500 3" stroke="#333" stroke-width="1.500"/></svg><i class="absolute -bottom-[11px] h-[5px] w-[9px] rounded-full bg-[#888]"></i></button>
    <button class="flex w-[66px] justify-center" aria-label="Chrome"><svg class="size-9"><use href="#chrome"/></svg></button>
    <button class="relative flex w-[66px] justify-center" aria-label="Chrome, profil 2"><svg class="size-9"><use href="#chrome"/></svg><svg class="absolute -top-[7px] right-[7px] size-[26px]" viewBox="0 0 26 26"><circle cx="13" cy="13" r="13" fill="#26140f"/><path d="M6 6q7-4 14 0l1 8q-3 7-5 8l-3-4-3 4q-4-3-5-8z" fill="#4a1d10"/><path d="M8 10l4 2-3 2zM18 10l-4 2 3 2zM10 16l3 1 3-1-1 6h-4z" fill="#d9733c"/><path d="M8 8v8M18 8v8" stroke="#1c0d0a" stroke-width="1.500"/></svg><i class="absolute -bottom-[11px] h-[5px] w-[9px] rounded-full bg-[#888]"></i></button>
    <button class="relative flex w-[66px] justify-center" aria-label="LEGO Education SPIKE"><span class="flex h-[59px] w-[58px] items-center justify-center rounded-lg border-2 border-[#dedede] bg-[#f5f5f5]"><svg class="size-9" viewBox="0 0 36 36"><path d="M0 0h36v11H0z" fill="#fff"/><path d="M0 11h36v25H0z" fill="#ffd500"/><path d="M6 2.500h5v5H6z" fill="#d2301f"/><path d="M13 5h17" stroke="#444" stroke-width="2.500" stroke-dasharray="1.500 .6"/><path d="M6 9.500h24" stroke="#a9c4dd"/><g fill="none" stroke="#3a3000" stroke-width="1.800"><path d="M7 20q-4-1-3 2t3 3-1 3M11 32V20q5-1 4 3t-4 3M18.500 21v6M18.500 17.500v1.500M22 17v10M26 20l-4 4 4 3M28 24h5q0-4-3-3.500t-1.500 5 4 .5"/></g></svg></span><i class="absolute bottom-0 h-[5px] w-6 rounded-full bg-[#0078d4]"></i></button>
  </div>
  <div class="flex items-center justify-end pr-7 pb-px text-[17px] text-[#1a1a1a]">
    <button aria-label="Icônes masquées"><svg class="h-[10px] w-4" viewBox="0 0 16 10" fill="none" stroke="#222" stroke-width="1.800"><path d="m1 9 7-7.500L15 9"/></svg></button>
    <button class="ml-7" aria-label="OneDrive"><svg class="h-4 w-6" viewBox="0 0 24 16"><path d="M6 16A5.500 5.500 0 0 1 4.500 5Q8 0 12.500 0T19 5q5 1 5 5.500T19 16z" fill="#0f78d4"/><path d="M6 4.500Q9 0 12.500 0T19 5l-5 3z" fill="#0a5cb8"/><path d="m1.500 14 14-7.500Q24 9 24 11q-1 5-5 5H6q-3 0-4.500-2z" fill="#28a8ea"/></svg></button>
    <button class="ml-[30px]">FRA</button>
    <button class="ml-[30px]" aria-label="Réseau"><svg class="h-6 w-[25px]" viewBox="0 0 25 24" fill="none" stroke="#1a1a1a" stroke-width="1.400"><path d="M15 1H4Q1 1 1 4v11q0 3 3 3h14M8 18v4M15 18v4M5 23h13M17.500 1h6v6q0 2-3 2t-3-2zM17.500 4.500h6M20.500 9v14"/></svg></button>
    <button class="ml-[10px]" aria-label="Son coupé"><svg class="h-[18px] w-6" viewBox="0 0 24 18" fill="none" stroke="#1a1a1a" stroke-width="1.400"><path d="M1 6h3.500L10 1v16l-5.500-5H1zM14.500 5l8 8M22.500 5l-8 8"/></svg></button>
    <button class="ml-3" aria-label="Batterie"><svg class="h-[19px] w-6" viewBox="0 0 24 19"><path d="M8 4.500h9.500q3 0 3 3v7q0 3-3 3h-14q-2.500 0-2.500-3V11" fill="none" stroke="#1a1a1a" stroke-width="1.500"/><path d="M9 7h8.500v8H3.500v-2.500H6zM21 9h1.500q1.500 0 1.500 2t-1.500 2H21z" fill="#1a1a1a"/><path d="M4.500 0 1 6.500h2.500L2.500 11 8 4.500H5.200L6 0z" fill="#1a1a1a"/></svg></button>
    <time class="ml-6 text-right text-lg leading-6">11:49<br>2025-12-11</time>
  </div>
</footer>
</body>
</html>
